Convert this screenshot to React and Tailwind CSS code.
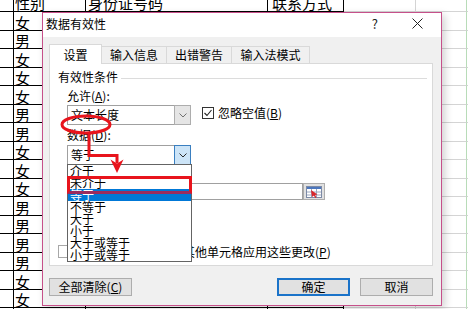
const cells = ['女','男','女','女','女','男','男','女','女','女','男','男','男','男','女','女',''];
const listItems = ['介于','未介于','等于','不等于','大于','小于','大于或等于','小于或等于'];

function SheetRow({ h, b = '', c = '', d = '', header = false }) {
  const al = header ? 'items-end pb-[1px]' : 'items-end';
  return (
    <div className={`flex shrink-0 ${h}`}>
      <div className="w-[14px] shrink-0 border-r border-b border-black" />
      <div className={`w-[72px] shrink-0 border-r border-b border-black flex overflow-hidden pl-[1px] text-[15px] leading-[15px] ${al}`}>{b}</div>
      <div className={`w-[182px] shrink-0 border-r border-b border-black flex overflow-hidden pl-[2px] text-[15px] leading-[15px] ${al}`}>{c}</div>
      <div className={`w-[76px] shrink-0 border-r border-b border-black flex overflow-hidden pl-[4px] text-[15px] leading-[15px] ${al}`}>{d}</div>
      <div className="w-[72px] shrink-0 border-r border-b border-[#d4d4d4]" />
      <div className="w-[51px] shrink-0 border-r border-b border-[#d4d4d4] border-r-[#b8dcb8]" />
      <div className="flex-1 border-b border-[#d4d4d4]" />
    </div>
  );
}

function Sheet() {
  return (
    <div className="flex flex-col">
      <SheetRow h="h-[12px]" b="性别" c="身份证号码" d="联系方式" header />
      {cells.map((t, i) => (
        <SheetRow key={i} h="h-[18.5px]" b={t} />
      ))}
    </div>
  );
}

function Chevron({ color = '#606060' }) {
  return (
    <svg width="8" height="5" viewBox="0 0 8 5">
      <polyline points="0.5,0.5 4,4 7.5,0.5" fill="none" stroke={color} strokeWidth="1" />
    </svg>
  );
}

function Combo({ text, focused = false }) {
  return (
    <div className="w-[124px] h-[20px] shrink-0 flex border border-[#a0a0a0] bg-white">
      <div className="flex-1 flex items-center pl-[3px] text-[12px] leading-[12px]">{text}</div>
      <div
        className={
          focused
            ? 'w-[17px] -my-px -mr-px flex items-center justify-center bg-[#cce4f7] border border-[#3a7fc0]'
            : 'w-[17px] -my-px -mr-px flex items-center justify-center bg-[#e5e5e5] border border-[#adadad]'
        }
      >
        <Chevron color={focused ? '#2a2a2a' : '#707070'} />
      </div>
    </div>
  );
}

function RangeIcon() {
  return (
    <svg width="16" height="12" viewBox="0 0 16 12">
      <rect x="0.5" y="0.5" width="15" height="11" fill="#ffffff" stroke="#7c8aa6" />
      <rect x="1" y="1" width="14" height="2" fill="#4b76bd" />
      <line x1="1" y1="6" x2="15" y2="6" stroke="#9aa6bf" />
      <line x1="1" y1="9" x2="15" y2="9" stroke="#9aa6bf" />
      <line x1="5.5" y1="3" x2="5.5" y2="11" stroke="#9aa6bf" />
      <line x1="10.5" y1="3" x2="10.5" y2="11" stroke="#9aa6bf" />
      <path d="M5 4 L11.5 8.5 L9 9 L10.5 11.5 L9.3 12 L7.8 9.6 L6 11 Z" fill="#d9262c" />
    </svg>
  );
}

function Dialog() {
  return (
    <div className="absolute left-[42px] top-[12px] w-[400px] h-[294px] border border-[#c6508a] bg-[#f0f0f0] flex flex-col shadow-[3px_3px_8px_rgba(0,0,0,0.18)]">
      {/* title bar */}
      <div className="h-[24px] shrink-0 bg-white flex items-center pl-[3px] pb-[3px]">
        <div className="flex-1 text-[12px] leading-[12px] text-black">数据有效性</div>
        <div className="text-[13px] leading-[13px] text-[#222] mr-[34px]">?</div>
        <svg width="11" height="11" viewBox="0 0 11 11" className="mr-[18px]">
          <line x1="0.5" y1="0.5" x2="10.5" y2="10.5" stroke="#222" strokeWidth="1" />
          <line x1="10.5" y1="0.5" x2="0.5" y2="10.5" stroke="#222" strokeWidth="1" />
        </svg>
      </div>

      {/* body */}
      <div className="flex-1 flex flex-col px-[6px] pt-[7px]">
        {/* tabs */}
        <div className="h-[19px] flex items-end text-[12px] leading-[12px]">
          <div className="relative z-10 w-[53px] h-[20px] -mb-px bg-white border border-b-0 border-[#d9d9d9] flex items-center justify-center">设置</div>
          <div className="w-[66px] h-[17px] -ml-px bg-[#f0f0f0] border border-b-0 border-[#d9d9d9] flex items-center justify-center">输入信息</div>
          <div className="w-[66px] h-[17px] -ml-px bg-[#f0f0f0] border border-b-0 border-[#d9d9d9] flex items-center justify-center">出错警告</div>
          <div className="w-[79px] h-[17px] -ml-px bg-[#f0f0f0] border border-b-0 border-[#d9d9d9] flex items-center justify-center">输入法模式</div>
        </div>

        {/* panel */}
        <div className="w-[384px] h-[203px] shrink-0 bg-white border border-[#d9d9d9] flex flex-col text-[12px] leading-[12px]">
          <div className="mt-[7px] ml-[8px] mr-[5px] h-[12px] flex items-center">
            <span>有效性条件</span>
            <div className="flex-1 h-px bg-[#dcdcdc] ml-[3px] mt-[2px]" />
          </div>
          <div className="mt-[7px] ml-[17px] h-[12px]">允许(<span className="underline">A</span>):</div>
          <div className="mt-[3px] ml-[17px] h-[20px] flex items-center">
            <Combo text="文本长度" />
            <div className="flex items-center ml-[11px] -mt-[4px]">
              <div className="w-[12px] h-[12px] border border-[#333] bg-white flex items-center justify-center">
                <svg width="10" height="10" viewBox="0 0 10 10">
                  <polyline points="1.5,5 4,7.5 8.5,2" fill="none" stroke="#222" strokeWidth="1.1" />
                </svg>
              </div>
              <span className="ml-[4px]">忽略空值(<span className="underline">B</span>)</span>
            </div>
          </div>
          <div className="mt-[4px] ml-[17px] h-[12px]">数据(<span className="underline">D</span>):</div>
          <div className="mt-[4px] ml-[17px] h-[20px] flex">
            <Combo text="等于" focused />
          </div>
          <div className="mt-[4px] ml-[17px] h-[12px]">来源(<span className="underline">S</span>):</div>
          <div className="mt-[2px] ml-[17px] h-[17px] flex">
            <div className="w-[236px] h-[17px] bg-white border border-[#a0a0a0]" />
            <div className="w-[22px] h-[17px] bg-[#e1e1e1] border border-[#adadad] flex items-center justify-center">
              <RangeIcon />
            </div>
          </div>
          <div className="mt-[45px] ml-[8px] h-[13px] flex items-center">
            <div className="w-[13px] h-[13px] border border-[#a8a8a8] bg-white" />
            <span className="ml-[4px]">对有同样设置的所有其他单元格应用这些更改(<span className="underline">P</span>)</span>
          </div>
        </div>

        {/* buttons */}
        <div className="mt-[12px] w-[384px] h-[18px] flex text-[12px] leading-[12px]">
          <div className="w-[83px] h-[18px] bg-[#e1e1e1] border border-[#adadad] flex items-center justify-center">全部清除(<span className="underline">C</span>)</div>
          <div className="flex-1" />
          <div className="w-[73px] h-[18px] bg-[#e1e1e1] border-2 border-[#1a73c9] flex items-center justify-center">确定</div>
          <div className="w-[73px] h-[18px] ml-[10px] bg-[#e1e1e1] border border-[#adadad] flex items-center justify-center">取消</div>
        </div>
      </div>
    </div>
  );
}

function DropList() {
  return (
    <div className="absolute left-[67px] top-[164px] w-[125px] h-[98px] bg-white border border-[#646464] flex flex-col text-[12px] leading-[12px]">
      {listItems.map((t, i) => (
        <div
          key={t}
          className={i === 2 ? 'h-[12px] pl-[2px] bg-[#0078d7] text-white overflow-hidden' : 'h-[12px] pl-[2px] text-black overflow-hidden'}
        >
          {t}
        </div>
      ))}
    </div>
  );
}

function Annotations() {
  return (
    <>
      <div className="absolute left-[67px] top-[176px] w-[125px] h-[18px] border-[3px] border-[#e8141c] border-b-[#9a2c5e] pointer-events-none" />
      <svg className="absolute left-0 top-0 pointer-events-none" width="468" height="309" viewBox="0 0 468 309">
        <ellipse cx="86" cy="124.5" rx="24" ry="8.5" fill="none" stroke="#e8141c" strokeWidth="3" />
        <polyline points="89,133 89,155.5 117,155.5 117,163" fill="none" stroke="#e8141c" strokeWidth="3" />
        <polygon points="110.5,159.5 117,163.5 123.5,159.5 117,173" fill="#e8141c" />
      </svg>
    </>
  );
}

export default function App() {
  return (
    <div className="relative w-[468px] h-[309px] overflow-hidden bg-white text-black font-['Noto_Sans_CJK_SC',sans-serif]">
      <Sheet />
      <Dialog />
      <DropList />
      <Annotations />
    </div>
  );
}
